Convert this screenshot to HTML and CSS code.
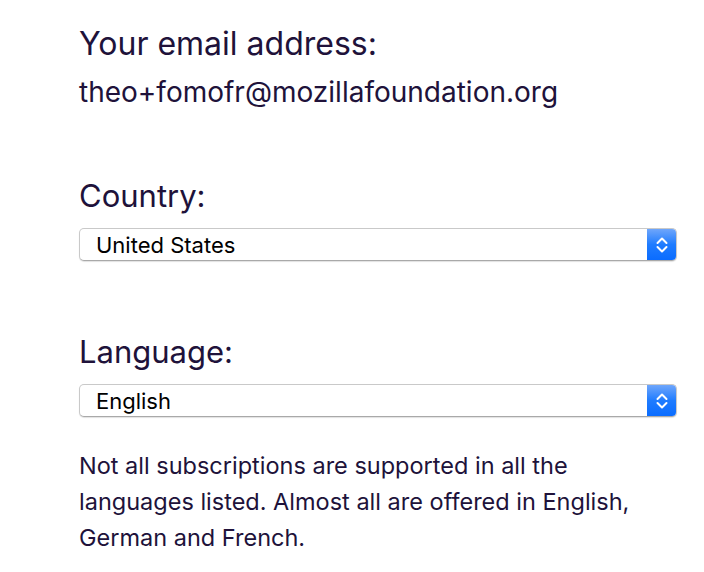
FILE: index.html
```html
<!DOCTYPE html>
<html>
<head>
  <title>Newsletter preferences</title>
  <link rel="stylesheet" href="styles.css">
</head>
<body>
  <div class="prefs">
    <div class="field field-email">
      <h2>Your email address:</h2>
      <p class="email">theo+fomofr@mozillafoundation.org</p>
    </div>

    <div class="field">
      <label for="country">Country:</label>
      <div class="select-box">
        <select id="country">
          <option>United States</option>
          <option>Canada</option>
          <option>France</option>
          <option>Germany</option>
        </select>
        <span class="arrows">
          <svg width="14" height="20" viewBox="0 0 14 20">
            <path d="M2.5 8 L7 3.5 L11.5 8 M2.5 12 L7 16.5 L11.5 12" fill="none" stroke="#fff" stroke-width="2" stroke-linecap="round" stroke-linejoin="round"/>
          </svg>
        </span>
      </div>
    </div>

    <div class="field">
      <label for="language">Language:</label>
      <div class="select-box">
        <select id="language">
          <option>English</option>
          <option>Deutsch</option>
          <option>Français</option>
        </select>
        <span class="arrows">
          <svg width="14" height="20" viewBox="0 0 14 20">
            <path d="M2.5 8 L7 3.5 L11.5 8 M2.5 12 L7 16.5 L11.5 12" fill="none" stroke="#fff" stroke-width="2" stroke-linecap="round" stroke-linejoin="round"/>
          </svg>
        </span>
      </div>
      <p class="note">Not all subscriptions are supported in all the languages listed. Almost all are offered in English, German and French.</p>
    </div>
  </div>
</body>
</html>
```

FILE: styles.css
```css
* {
  box-sizing: border-box;
  margin: 0;
  padding: 0;
}
body {
  font-family: Inter, Lato, Arial, sans-serif;
  color: #20123a;
  background-color: #fff;
}
.prefs {
  width: 598px;
  margin-left: 79px;
  padding-top: 24px;
}
.field {
  margin-bottom: 71px;
}
.field-email {
  margin-bottom: 66px;
}
.field:last-child {
  margin-bottom: 0;
}
.field h2 {
  font-size: 32px;
  font-weight: 400;
  line-height: 40px;
  margin-bottom: 10px;
}
.field label {
  display: block;
  font-size: 31px;
  line-height: 40px;
  margin-bottom: 12px;
}
.email {
  font-size: 28px;
  line-height: 36px;
}
.select-box {
  display: flex;
  height: 33px;
  border: 1px solid #c9c9c9;
  border-bottom-color: #a9a9a9;
  border-radius: 5px;
  overflow: hidden;
  box-shadow: 0 1px 1px rgba(0, 0, 0, 0.12);
  background-color: #fff;
}
.select-box select {
  flex: 1;
  appearance: none;
  -webkit-appearance: none;
  border: none;
  outline: none;
  background: transparent;
  font-family: Inter, Lato, Arial, sans-serif;
  font-size: 22px;
  color: #000;
  padding-left: 16px;
}
.arrows {
  width: 29px;
  display: flex;
  align-items: center;
  justify-content: center;
  background: linear-gradient(#6fa6fb, #1f7cff 50%, #0a6cff);
}
.note {
  max-width: 580px;
  margin-top: 31px;
  font-size: 23.5px;
  line-height: 36px;
}
```
